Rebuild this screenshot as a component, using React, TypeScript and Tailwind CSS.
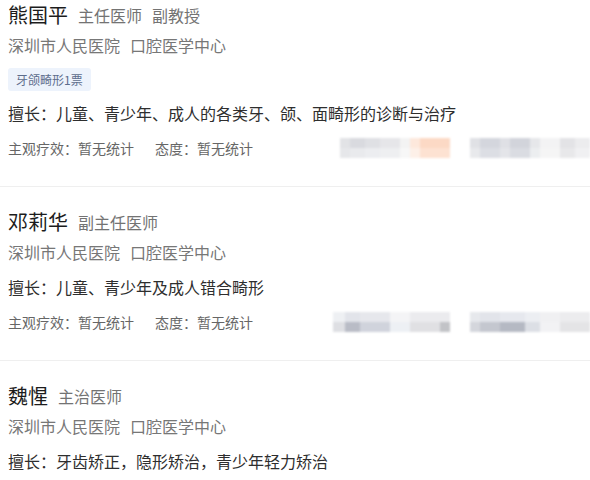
import React from "react";

type Cell = { w: string; top: string; bot: string };

const C1A: Cell[] = [
  { w: "w-[10px]", top: "bg-[#e2e3e6]", bot: "bg-[#e6e7ea]" },
  { w: "w-[15px]", top: "bg-[#d9dadf]", bot: "bg-[#e9eaed]" },
  { w: "w-[15px]", top: "bg-[#dfe0e4]", bot: "bg-[#ecedf0]" },
  { w: "w-[20px]", top: "bg-[#e6e6e9]", bot: "bg-[#eeeff1]" },
  { w: "w-[10px]", top: "bg-[#f3f3f3]", bot: "bg-[#f7f7f7]" },
  { w: "w-[10px]", top: "bg-[#fde8dc]", bot: "bg-[#fdf0e8]" },
  { w: "w-[30px]", top: "bg-[#fcd9c5]", bot: "bg-[#fde2d2]" },
];
const C1B: Cell[] = [
  { w: "w-[10px]", top: "bg-[#e0e1e5]", bot: "bg-[#e8e9ec]" },
  { w: "w-[20px]", top: "bg-[#d4d6dd]", bot: "bg-[#dcdee4]" },
  { w: "w-[10px]", top: "bg-[#dfe0e5]", bot: "bg-[#e4e5e9]" },
  { w: "w-[20px]", top: "bg-[#d2d4db]", bot: "bg-[#dadce2]" },
  { w: "w-[10px]", top: "bg-[#e6e7ea]", bot: "bg-[#eceef0]" },
  { w: "w-[20px]", top: "bg-[#f3f3f4]", bot: "bg-[#f5f5f5]" },
  { w: "w-[15px]", top: "bg-[#e3e3e6]", bot: "bg-[#e8e8ea]" },
  { w: "w-[15px]", top: "bg-[#ececee]", bot: "bg-[#f0f0f2]" },
];
const C2A: Cell[] = [
  { w: "w-[12px]", top: "bg-[#eef0f3]", bot: "bg-[#dedfe3]" },
  { w: "w-[15px]", top: "bg-[#e2e4ea]", bot: "bg-[#b9bcc6]" },
  { w: "w-[30px]", top: "bg-[#e6e7ec]", bot: "bg-[#d0d3dc]" },
  { w: "w-[20px]", top: "bg-[#f4f4f6]", bot: "bg-[#edf0f4]" },
  { w: "w-[30px]", top: "bg-[#ebebee]", bot: "bg-[#e0e0e3]" },
  { w: "w-[10px]", top: "bg-[#ebebee]", bot: "bg-[#c2c3c7]" },
];
const C2B: Cell[] = [
  { w: "w-[10px]", top: "bg-[#e6e8ec]", bot: "bg-[#d4d6dc]" },
  { w: "w-[20px]", top: "bg-[#e2e4ea]", bot: "bg-[#c4c7cf]" },
  { w: "w-[25px]", top: "bg-[#e6e8ee]", bot: "bg-[#b5b9c3]" },
  { w: "w-[15px]", top: "bg-[#eceef2]", bot: "bg-[#dcdfe5]" },
  { w: "w-[20px]", top: "bg-[#f0f0f2]", bot: "bg-[#f2f2f4]" },
  { w: "w-[30px]", top: "bg-[#ececee]", bot: "bg-[#e4e4e6]" },
];

function Blur({ cells }: { cells: Cell[] }) {
  return (
    <div className="flex blur-[1px]">
      {cells.map((c, i) => (
        <div key={i} className={`flex flex-col ${c.w}`}>
          <div className={`h-[10px] ${c.top}`} />
          <div className={`h-[10px] ${c.bot}`} />
        </div>
      ))}
    </div>
  );
}

type Doc = {
  name: string;
  titles: string[];
  tag?: string;
  skill: string;
  stats: boolean;
  blurA?: Cell[];
  blurB?: Cell[];
};

const docs: Doc[] = [
  {
    name: "熊国平",
    titles: ["主任医师", "副教授"],
    tag: "牙颌畸形1票",
    skill: "擅长：儿童、青少年、成人的各类牙、颌、面畸形的诊断与治疗",
    stats: true,
    blurA: C1A,
    blurB: C1B,
  },
  {
    name: "邓莉华",
    titles: ["副主任医师"],
    skill: "擅长：儿童、青少年及成人错合畸形",
    stats: true,
    blurA: C2A,
    blurB: C2B,
  },
  {
    name: "魏惺",
    titles: ["主治医师"],
    skill: "擅长：牙齿矫正，隐形矫治，青少年轻力矫治",
    stats: false,
  },
];

export default function App() {
  return (
    <div
      className="w-[590px] h-[480px] overflow-hidden bg-white"
      style={{ fontFamily: '"Noto Sans CJK SC", "Noto Sans", sans-serif' }}
    >
      <div className="-mt-[20px]">
        {docs.map((d, i) => (
          <div
            key={i}
            className="pl-[8px] pt-[23px] pb-[27px] border-b border-[#efefef]"
          >
            <div className="flex items-center h-[24px]">
              <span className="text-[20px] leading-[24px] text-[#1c1c1c]">
                {d.name}
              </span>
              {d.titles.map((t, j) => (
                <span
                  key={j}
                  className="ml-[10px] text-[16px] leading-[24px] text-[#737373]"
                >
                  {t}
                </span>
              ))}
            </div>
            <div className="mt-[7px] h-[22px] flex items-center text-[16px] leading-[22px] text-[#777777]">
              <span>深圳市人民医院</span>
              <span className="ml-[10px]">口腔医学中心</span>
            </div>
            {d.tag && (
              <div className="mt-[12px] flex">
                <span className="h-[23px] px-[8px] rounded-[3px] bg-[#edf3fc] text-[#5d6d8c] text-[12px] leading-[23px]">
                  {d.tag}
                </span>
              </div>
            )}
            <div
              className={`${d.tag ? "mt-[11px]" : "mt-[13px]"} h-[22px] text-[16px] leading-[22px] text-[#2e2e2e]`}
            >
              {d.skill}
            </div>
            {d.stats && (
              <div className="mt-[13px] h-[22px] flex items-center justify-between">
                <div className="flex items-center text-[14px] leading-[22px] text-[#666666]">
                  <span>主观疗效：暂无统计</span>
                  <span className="ml-[21px]">态度：暂无统计</span>
                </div>
                <div className="flex items-center gap-[20px]">
                  {d.blurA && <Blur cells={d.blurA} />}
                  {d.blurB && <Blur cells={d.blurB} />}
                </div>
              </div>
            )}
          </div>
        ))}
      </div>
    </div>
  );
}
